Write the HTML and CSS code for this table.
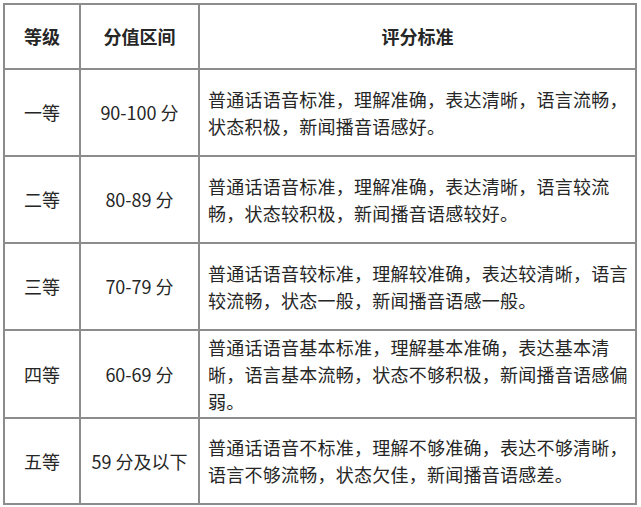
FILE: index.html
```html
<!DOCTYPE html>
<html lang="zh-CN">
<head>
<meta charset="utf-8">
<link rel="stylesheet" href="styles.css">
<title>评分标准</title>
</head>
<body>
<div class="grid">
  <div class="cell head c1">等级</div>
  <div class="cell head c2">分值区间</div>
  <div class="cell head c3">评分标准</div>

  <div class="cell r1 c1">一等</div>
  <div class="cell r1 c2">90-100 分</div>
  <div class="cell r1 text">普通话语音标准，理解准确，表达清晰，语言流畅，状态积极，新闻播音语感好。</div>

  <div class="cell r2 c1">二等</div>
  <div class="cell r2 c2">80-89 分</div>
  <div class="cell r2 text">普通话语音标准，理解准确，表达清晰，语言较流畅，状态较积极，新闻播音语感较好。</div>

  <div class="cell r3 c1">三等</div>
  <div class="cell r3 c2">70-79 分</div>
  <div class="cell r3 text">普通话语音较标准，理解较准确，表达较清晰，语言较流畅，状态一般，新闻播音语感一般。</div>

  <div class="cell r4 c1">四等</div>
  <div class="cell r4 c2">60-69 分</div>
  <div class="cell r4 text">普通话语音基本标准，理解基本准确，表达基本清晰，语言基本流畅，状态不够积极，新闻播音语感偏弱。</div>

  <div class="cell r5 c1">五等</div>
  <div class="cell r5 c2">59 分及以下</div>
  <div class="cell r5 text">普通话语音不标准，理解不够准确，表达不够清晰，语言不够流畅，状态欠佳，新闻播音语感差。</div>
</div>
</body>
</html>
```

FILE: styles.css
```css
html, body {
  margin: 0;
  padding: 0;
  background: #ffffff;
}
body {
  padding: 3px 0 0 3px;
  font-family: "Noto Sans CJK SC", "Noto Sans", sans-serif;
  color: #262626;
}
.grid {
  display: grid;
  width: 634px;
  box-sizing: border-box;
  grid-template-columns: 74px 117px 1fr;
  grid-template-rows: 63px 85px 85px 85px 86px 84px;
  gap: 2px;
  padding: 2px;
  background: #8c8c8c;
}
.cell {
  background: #ffffff;
  font-size: 18px;
  line-height: 27px;
  display: flex;
  align-items: center;
  justify-content: center;
  text-align: center;
}
.head {
  font-weight: bold;
}
.text {
  justify-content: flex-start;
  text-align: left;
  letter-spacing: 0.25px;
  padding: 0 5px 0 8px;
}
```
